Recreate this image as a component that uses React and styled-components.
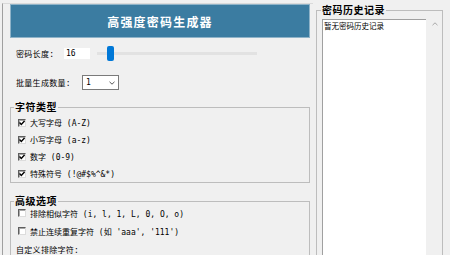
import React from 'react';
import styled, { createGlobalStyle } from 'styled-components';

const GlobalStyle = createGlobalStyle`
  html, body {
    margin: 0;
    padding: 0;
    background: #f0f0f0;
  }
  body {
    font-family: "Noto Sans CJK SC", "Noto Sans", sans-serif;
    color: #000;
  }
`;

// small widget text: half-width mono ASCII next to CJK, like the Tk default font
const smallFont = `"DejaVu Sans Mono", "Noto Sans CJK SC", monospace`;

const Window = styled.div`
  display: flex;
  align-items: flex-start;
  width: 450px;
  height: 255px;
  overflow: hidden;
  background: #f0f0f0;
`;

const LeftPanel = styled.div`
  box-sizing: border-box;
  width: 311px;
  height: 252px;
  margin: 3px 0 0 2px;
  padding-left: 7px;
  border-left: 1px solid #a0a0a0;
  border-top: 1px solid #dadada;
  display: flex;
  flex-direction: column;
`;

const Header = styled.div`
  box-sizing: border-box;
  width: 300px;
  height: 34px;
  flex-shrink: 0;
  background: #3b7ca1;
  border: 1px solid #8fb3c8;
  display: flex;
  align-items: center;
  justify-content: center;
  color: #fff;
  font-size: 12px;
  font-weight: 700;
  letter-spacing: 1.2px;
`;

const Row = styled.div`
  display: flex;
  align-items: center;
  flex-shrink: 0;
  height: ${p => p.$h}px;
  margin-top: ${p => p.$mt || 0}px;
  padding-left: ${p => p.$pl || 6}px;
`;

const Label = styled.span`
  width: ${p => p.$w}px;
  font-family: ${smallFont};
  font-size: 8px;
  letter-spacing: 0.3px;
  white-space: nowrap;
`;

const Entry = styled.div`
  box-sizing: border-box;
  width: 26px;
  height: 11px;
  padding-left: 2px;
  background: #fff;
  font-family: ${smallFont};
  font-size: 8px;
  line-height: 11px;
`;

const Slider = styled.div`
  width: 160px;
  height: 16px;
  margin-left: 7px;
  display: flex;
  align-items: center;
  background: linear-gradient(#e2e2e2, #e2e2e2) center / 100% 3px no-repeat;
`;

const Thumb = styled.div`
  width: 7px;
  height: 15px;
  margin-left: ${p => p.$pos}px;
  border-radius: 2px;
  background: #0078d7;
`;

const Combo = styled.div`
  box-sizing: border-box;
  width: 37px;
  height: 15px;
  padding: 0 3px;
  display: flex;
  align-items: center;
  justify-content: space-between;
  background: #fff;
  border: 1px solid #7a7a7a;
  font-family: ${smallFont};
  font-size: 8px;
`;

const Frame = styled.fieldset`
  box-sizing: border-box;
  width: ${p => p.$w}px;
  min-width: 0;
  margin: ${p => p.$mt || 0}px 0 0 ${p => p.$ml || 0}px;
  padding: 0;
  border: 1px solid #bdbdbd;
  flex-shrink: 0;
`;

const Legend = styled.legend`
  margin-left: ${p => p.$ml}px;
  padding: 0 1px;
  font-size: 10px;
  font-weight: 700;
  line-height: 14px;
  letter-spacing: 0.5px;
`;

const Options = styled.div`
  display: flex;
  flex-direction: column;
  margin-top: ${p => p.$mt || 0}px;
`;

const CheckRow = styled.label`
  display: flex;
  align-items: center;
  gap: 4px;
  height: ${p => p.$h}px;
  padding-left: 7px;
  font-family: ${smallFont};
  font-size: 8px;
  white-space: nowrap;
`;

const Box = styled.span`
  box-sizing: border-box;
  width: 8px;
  height: 8px;
  display: flex;
  align-items: center;
  justify-content: center;
  background: #fff;
  border-top: 1px solid #5e5e5e;
  border-left: 1px solid #5e5e5e;
  border-bottom: 1px solid #dcdcdc;
  border-right: 1px solid #dcdcdc;
  box-shadow: inset 1px 1px 0 #a8a8a8;
`;

const HistoryBody = styled.div`
  display: flex;
  margin-top: 2px;
  padding-left: 5px;
  height: 240px;
`;

const HistoryText = styled.div`
  box-sizing: border-box;
  width: 104px;
  padding: 1px 1px 0;
  background: #fff;
  border-top: 1px solid #a0a0a0;
  border-left: 1px solid #a0a0a0;
  font-size: 7.5px;
  line-height: 10px;
  white-space: nowrap;
`;

const ScrollBar = styled.div`
  width: 15px;
  margin-left: 1px;
  display: flex;
  justify-content: center;
  padding-top: 3px;
  background: #f0f0f0;
`;

const Check = ({ checked, h, children }) => (
  <CheckRow $h={h}>
    <Box>
      {checked && (
        <svg width="6" height="6" viewBox="0 0 6 6">
          <path d="M0.5 2.5 L2.3 4.4 L5.5 0.9" fill="none" stroke="#000" strokeWidth="1.4" />
        </svg>
      )}
    </Box>
    {children}
  </CheckRow>
);

export default function App() {
  return (
    <>
      <GlobalStyle />
      <Window>
        <LeftPanel>
          <Header>高强度密码生成器</Header>

          <Row $h={16} $mt={7}>
            <Label $w={48}>密码长度:</Label>
            <Entry>16</Entry>
            <Slider>
              <Thumb $pos={10} />
            </Slider>
          </Row>

          <Row $h={15} $mt={14}>
            <Label $w={66}>批量生成数量:</Label>
            <Combo>
              1
              <svg width="6" height="4" viewBox="0 0 6 4">
                <path d="M0.5 0.8 L3 3.2 L5.5 0.8" fill="none" stroke="#444" strokeWidth="0.9" />
              </svg>
            </Combo>
          </Row>

          <Frame $w={300} $mt={10}>
            <Legend $ml={3}>字符类型</Legend>
            <Options>
              <Check checked h={17}>大写字母 (A-Z)</Check>
              <Check checked h={17}>小写字母 (a-z)</Check>
              <Check checked h={17}>数字 (0-9)</Check>
              <Check checked h={17}>特殊符号 (!@#$%^&*)</Check>
            </Options>
          </Frame>

          <Frame $w={300} $mt={11}>
            <Legend $ml={3}>高级选项</Legend>
            <Options $mt={-4}>
              <Check h={18}>排除相似字符 (i, l, 1, L, 0, O, o)</Check>
              <Check h={18}>禁止连续重复字符 (如 'aaa', '111')</Check>
              <Row $h={18} $pl={5}>
                <Label $w={120}>自定义排除字符:</Label>
              </Row>
            </Options>
          </Frame>
        </LeftPanel>

        <Frame $w={127} $mt={3} $ml={3}>
          <Legend $ml={4}>密码历史记录</Legend>
          <HistoryBody>
            <HistoryText>暂无密码历史记录</HistoryText>
            <ScrollBar>
              <svg width="6" height="4" viewBox="0 0 6 4">
                <path d="M0.5 3.2 L3 0.8 L5.5 3.2" fill="none" stroke="#a0a0a0" strokeWidth="0.9" />
              </svg>
            </ScrollBar>
          </HistoryBody>
        </Frame>
      </Window>
    </>
  );
}
